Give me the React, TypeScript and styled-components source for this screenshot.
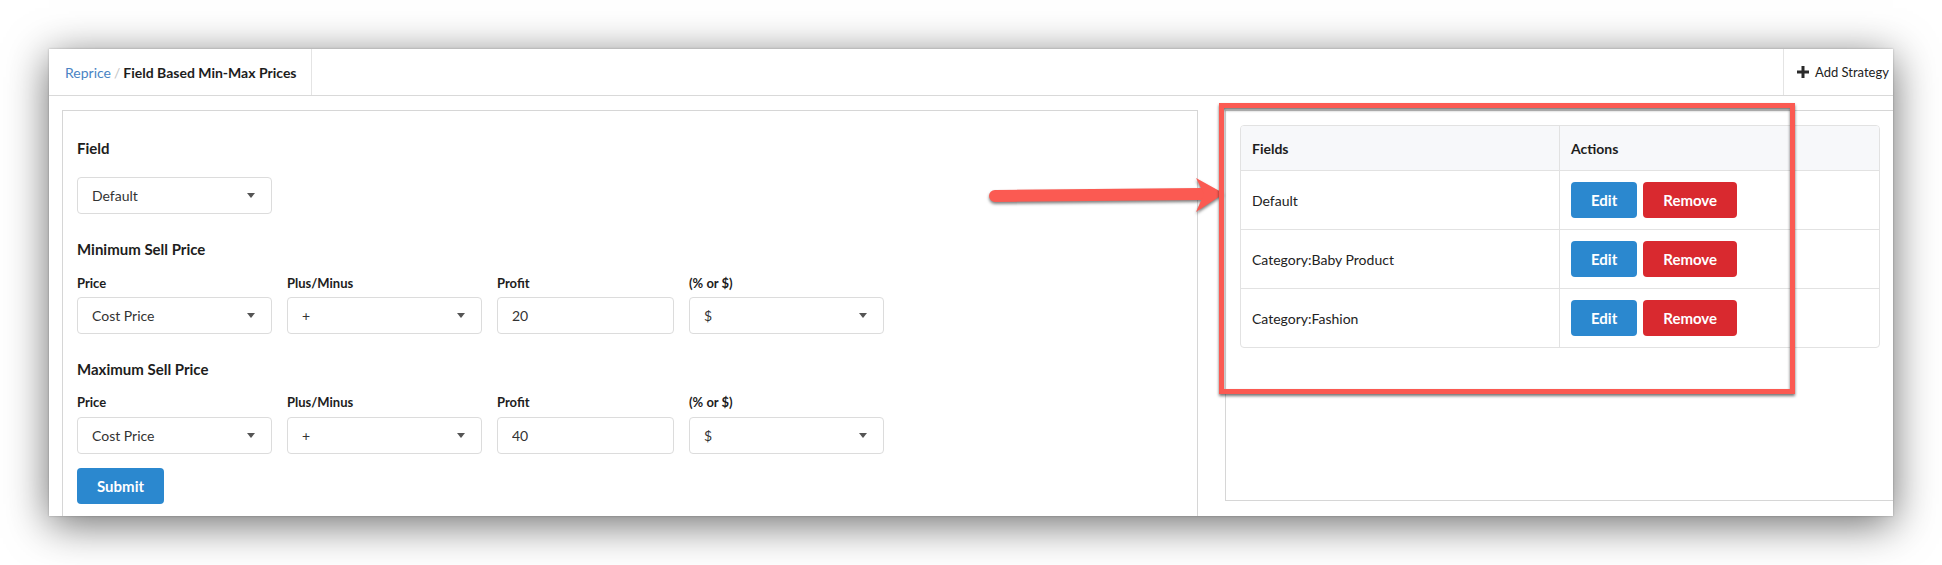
import React from "react";
import styled, { createGlobalStyle } from "styled-components";

const GlobalStyle = createGlobalStyle`
  html, body { margin: 0; padding: 0; background: #ffffff; }
  body { font-family: Lato, "Liberation Sans", sans-serif; color: #222; }
  * { box-sizing: border-box; }
`;

const Stage = styled.div`
  position: relative;
  width: 1942px;
  height: 565px;
  overflow: hidden;
  padding: 49px 0 0 49px;
  background: #fff;
`;

const Window = styled.div`
  width: 1844px;
  height: 467px;
  background: #fff;
  overflow: hidden;
  display: flex;
  flex-direction: column;
  box-shadow: 0 8px 40px rgba(0, 0, 0, 0.58), 0 0 2px rgba(0, 0, 0, 0.25);
`;

const TopBar = styled.div`
  display: flex;
  height: 47px;
  flex-shrink: 0;
  border-bottom: 1px solid #d9d9d9;
`;

const Crumb = styled.div`
  display: flex;
  align-items: center;
  padding: 0 14px 0 16px;
  border-right: 1px solid #e4e4e4;
  font-size: 14px;
  white-space: nowrap;
`;

const CrumbLink = styled.span`
  color: #4a84c4;
`;

const CrumbSep = styled.span`
  color: #c4c4c4;
  margin: 0 3px;
`;

const CrumbCurrent = styled.span`
  color: #1d1d1d;
  font-weight: 700;
`;

const Spacer = styled.div`
  flex: 1;
`;

const AddCell = styled.div`
  width: 110px;
  flex-shrink: 0;
  display: flex;
  align-items: center;
  gap: 6px;
  padding-left: 13px;
  border-left: 1px solid #e4e4e4;
  font-size: 13px;
  color: #222;
  white-space: nowrap;
`;

const Content = styled.div`
  display: flex;
  align-items: flex-start;
  gap: 27px;
  padding: 14px 0 0 13px;
`;

const LeftPanel = styled.div`
  width: 1136px;
  flex-shrink: 0;
  border: 1px solid #d6d6d6;
  padding: 27px 14px 40px;
  display: flex;
  flex-direction: column;
`;

const RightPanel = styled.div`
  width: 700px;
  height: 391px;
  flex-shrink: 0;
  border: 1px solid #d6d6d6;
  padding: 14px;
`;

const Heading = styled.div<{ $mt?: number }>`
  font-size: 15px;
  font-weight: 700;
  line-height: 20px;
  color: #1d1d1d;
  margin-top: ${(p) => p.$mt ?? 0}px;
`;

const FieldRow = styled.div<{ $mt?: number }>`
  display: flex;
  gap: 15px;
  margin-top: ${(p) => p.$mt ?? 0}px;
`;

const FieldCol = styled.div<{ $w: number }>`
  width: ${(p) => p.$w}px;
  display: flex;
  flex-direction: column;
`;

const Label = styled.div<{ $gap: number }>`
  font-size: 13px;
  font-weight: 700;
  line-height: 18px;
  color: #1d1d1d;
  margin-bottom: ${(p) => p.$gap}px;
`;

const SelectBox = styled.div<{ $w?: number; $mt?: number }>`
  width: ${(p) => (p.$w ? `${p.$w}px` : "100%")};
  height: 37px;
  border: 1px solid #dcdcdc;
  border-radius: 4px;
  padding: 0 14px 0 14px;
  display: flex;
  align-items: center;
  justify-content: space-between;
  font-size: 14px;
  color: #333;
  background: #fff;
  margin-top: ${(p) => p.$mt ?? 0}px;
`;

const Caret = styled.span`
  width: 0;
  height: 0;
  border-left: 4px solid transparent;
  border-right: 4px solid transparent;
  border-top: 5px solid #555;
  margin-right: 2px;
`;

const TextInput = styled.input`
  width: 100%;
  height: 37px;
  border: 1px solid #dcdcdc;
  border-radius: 4px;
  padding: 0 14px;
  font-family: Lato, "Liberation Sans", sans-serif;
  font-size: 14px;
  color: #333;
  outline: none;
  background: #fff;
`;

const Button = styled.button<{ $variant: "primary" | "danger"; $mt?: number }>`
  height: 36px;
  padding: 0 20px;
  border: none;
  border-radius: 4px;
  font-family: Lato, "Liberation Sans", sans-serif;
  font-size: 15px;
  font-weight: 700;
  color: #fff;
  background: ${(p) => (p.$variant === "primary" ? "#2b88cf" : "#d9292f")};
  align-self: flex-start;
  margin-top: ${(p) => p.$mt ?? 0}px;
  cursor: pointer;
`;

const Table = styled.table`
  width: 640px;
  border-collapse: separate;
  border-spacing: 0;
  border: 1px solid #e2e2e2;
  border-radius: 4px;
  overflow: hidden;
  font-size: 14px;
`;

const Th = styled.th<{ $first?: boolean }>`
  height: 45px;
  padding: 0 11px;
  text-align: left;
  font-weight: 700;
  color: #1d1d1d;
  background: #f7f8fa;
  border-bottom: 1px solid #e2e2e2;
  border-right: ${(p) => (p.$first ? "1px solid #e2e2e2" : "none")};
  width: ${(p) => (p.$first ? "319px" : "auto")};
`;

const Td = styled.td<{ $first?: boolean; $last?: boolean }>`
  height: ${(p) => (p.$last ? 58 : 59)}px;
  padding: 0 11px;
  color: #222;
  border-bottom: ${(p) => (p.$last ? "none" : "1px solid #e2e2e2")};
  border-right: ${(p) => (p.$first ? "1px solid #e2e2e2" : "none")};
  vertical-align: middle;
`;

const Actions = styled.div`
  display: flex;
  gap: 6px;
`;

const HighlightBox = styled.div`
  position: absolute;
  left: 1219px;
  top: 103px;
  width: 576px;
  height: 291px;
  border: 5px solid #fb5a52;
  filter: drop-shadow(0 2px 1.5px rgba(0, 0, 0, 0.55));
  pointer-events: none;
`;

const ArrowSvg = styled.svg`
  position: absolute;
  left: 980px;
  top: 170px;
  overflow: visible;
  filter: drop-shadow(0 2px 1.5px rgba(0, 0, 0, 0.5));
  pointer-events: none;
`;

const PlusIcon = () => (
  <svg width="12" height="12" viewBox="0 0 12 12">
    <rect x="4.5" y="0" width="3" height="12" fill="#2a2a2a" />
    <rect x="0" y="4.5" width="12" height="3" fill="#2a2a2a" />
  </svg>
);

const Select = ({ value, w, mt }: { value: string; w?: number; mt?: number }) => (
  <SelectBox $w={w} $mt={mt}>
    <span>{value}</span>
    <Caret />
  </SelectBox>
);

const PriceRow = ({ profit, labelGap, mt }: { profit: string; labelGap: number; mt: number }) => (
  <FieldRow $mt={mt}>
    <FieldCol $w={195}>
      <Label $gap={labelGap}>Price</Label>
      <Select value="Cost Price" />
    </FieldCol>
    <FieldCol $w={195}>
      <Label $gap={labelGap}>Plus/Minus</Label>
      <Select value="+" />
    </FieldCol>
    <FieldCol $w={177}>
      <Label $gap={labelGap}>Profit</Label>
      <TextInput readOnly defaultValue={profit} />
    </FieldCol>
    <FieldCol $w={195}>
      <Label $gap={labelGap}>(% or $)</Label>
      <Select value="$" />
    </FieldCol>
  </FieldRow>
);

const rows = ["Default", "Category:Baby Product", "Category:Fashion"];

export default function App() {
  return (
    <>
      <GlobalStyle />
      <Stage>
        <Window>
          <TopBar>
            <Crumb>
              <CrumbLink>Reprice</CrumbLink>
              <CrumbSep>/</CrumbSep>
              <CrumbCurrent>Field Based Min-Max Prices</CrumbCurrent>
            </Crumb>
            <Spacer />
            <AddCell>
              <PlusIcon />
              <span>Add Strategy</span>
            </AddCell>
          </TopBar>
          <Content>
            <LeftPanel>
              <Heading>Field</Heading>
              <Select value="Default" w={195} mt={19} />
              <Heading $mt={25}>Minimum Sell Price</Heading>
              <PriceRow profit="20" labelGap={5} mt={15} />
              <Heading $mt={25}>Maximum Sell Price</Heading>
              <PriceRow profit="40" labelGap={6} mt={14} />
              <Button $variant="primary" $mt={14}>Submit</Button>
            </LeftPanel>
            <RightPanel>
              <Table>
                <thead>
                  <tr>
                    <Th $first>Fields</Th>
                    <Th>Actions</Th>
                  </tr>
                </thead>
                <tbody>
                  {rows.map((r, i) => (
                    <tr key={r}>
                      <Td $first $last={i === rows.length - 1}>{r}</Td>
                      <Td $last={i === rows.length - 1}>
                        <Actions>
                          <Button $variant="primary">Edit</Button>
                          <Button $variant="danger">Remove</Button>
                        </Actions>
                      </Td>
                    </tr>
                  ))}
                </tbody>
              </Table>
            </RightPanel>
          </Content>
        </Window>
        <ArrowSvg width="250" height="50" viewBox="0 0 250 50">
          <line x1="15" y1="26" x2="222" y2="24" stroke="#fb5a52" strokeWidth="12" strokeLinecap="round" />
          <polygon points="216,8 244,23.5 216,42 224,24" fill="#fb5a52" />
        </ArrowSvg>
        <HighlightBox />
      </Stage>
    </>
  );
}
